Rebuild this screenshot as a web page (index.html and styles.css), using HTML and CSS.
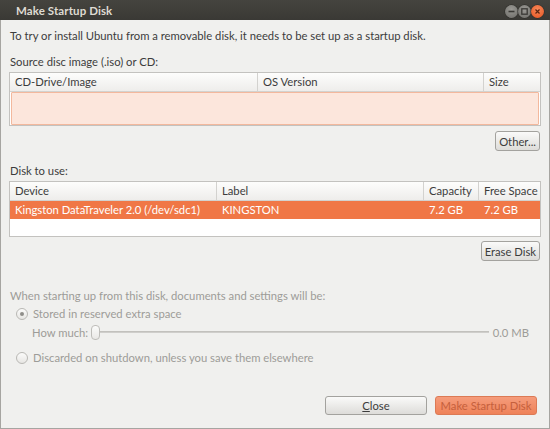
FILE: index.html
```html
<!DOCTYPE html>
<html>
<head>
<meta charset="utf-8">
<link rel="stylesheet" href="styles.css">
</head>
<body>
<div class="window">
  <div class="titlebar">
    <span class="title">Make Startup Disk</span>
    <div class="wbtns">
      <span class="wbtn gray"><svg width="13" height="13" viewBox="0 0 13 13"><rect x="3.5" y="5.7" width="6" height="1.6" fill="#3a3935"/></svg></span>
      <span class="wbtn gray"><svg width="13" height="13" viewBox="0 0 13 13"><rect x="3.8" y="3.8" width="5.4" height="5.4" fill="none" stroke="#3a3935" stroke-width="1.3"/></svg></span>
      <span class="wbtn orange"><svg width="13" height="13" viewBox="0 0 13 13"><path d="M4.5 4.5 L8.5 8.5 M8.5 4.5 L4.5 8.5" stroke="#5a2410" stroke-width="1.2"/></svg></span>
    </div>
  </div>
  <div class="main">
    <div class="text intro">To try or install Ubuntu from a removable disk, it needs to be set up as a startup disk.</div>
    <div class="text lbl">Source disc image (.iso) or CD:</div>
    <div class="table t1">
      <div class="thead">
        <div class="th">CD-Drive/Image</div>
        <div class="th">OS Version</div>
        <div class="th last">Size</div>
      </div>
      <div class="tbody1"><div class="empty-hl"></div></div>
    </div>
    <div class="btnrow r1"><button class="btn">Other...</button></div>
    <div class="text lbl2">Disk to use:</div>
    <div class="table t2">
      <div class="thead">
        <div class="th">Device</div>
        <div class="th">Label</div>
        <div class="th">Capacity</div>
        <div class="th last">Free Space</div>
      </div>
      <div class="trow sel">
        <div class="td">Kingston DataTraveler 2.0 (/dev/sdc1)</div>
        <div class="td">KINGSTON</div>
        <div class="td">7.2 GB</div>
        <div class="td">7.2 GB</div>
      </div>
      <div class="trow empty"></div>
    </div>
    <div class="btnrow r2"><button class="btn">Erase Disk</button></div>
    <div class="text dis when">When starting up from this disk, documents and settings will be:</div>
    <div class="radio r-stored"><span class="rb on"></span><span class="text dis">Stored in reserved extra space</span></div>
    <div class="howmuch">
      <span class="text dis">How much:</span>
      <div class="slider"><span class="track"></span><span class="thumb"></span></div>
      <span class="text dis mb">0.0 MB</span>
    </div>
    <div class="radio r-disc"><span class="rb"></span><span class="text dis">Discarded on shutdown, unless you save them elsewhere</span></div>
    <div class="footer">
      <button class="btn fbtn"><span class="ul">C</span>lose</button>
      <button class="btn fbtn primary">Make Startup Disk</button>
    </div>
  </div>
</div>
</body>
</html>
```
FILE: styles.css
```css
html, body {
  margin: 0;
  padding: 0;
  width: 550px;
  height: 429px;
  overflow: hidden;
  background: #f0f0ee;
  font-family: "Lato", "Noto Sans", sans-serif;
  font-size: 11.25px;
  color: #3c3c3c;
}
.window {
  width: 550px;
  height: 429px;
  display: flex;
  flex-direction: column;
  box-sizing: border-box;
}
.titlebar {
  height: 20px;
  flex: none;
  background: linear-gradient(#45443f, #3a3935);
  display: flex;
  align-items: center;
  justify-content: space-between;
  padding: 0 6px 0 16px;
}
.title {
  color: #dfdbd2;
  font-weight: bold;
  font-size: 11.5px;
  letter-spacing: 0.1px;
}
.wbtns {
  display: flex;
  gap: 0;
  margin-top: 2px;
}
.wbtn {
  width: 13px;
  height: 13px;
  border-radius: 50%;
  display: flex;
}
.wbtn.gray {
  background: radial-gradient(circle at 50% 35%, #9a9994, #6c6b67);
  box-shadow: 0 0 0 0.5px #2e2d2a;
}
.wbtn.orange {
  background: radial-gradient(circle at 50% 35%, #f7895a, #e6521f);
  box-shadow: 0 0 0 0.5px #2e2d2a;
}
.main {
  flex: 1;
  display: flex;
  flex-direction: column;
  border-left: 1px solid #a6a5a1;
  border-right: 1px solid #a6a5a1;
  border-bottom: 1px solid #a6a5a1;
  padding: 0 8px 13px 8px;
}
.text {
  line-height: 15px;
  white-space: nowrap;
}
.intro { margin-top: 8px; padding-left: 1px; }
.lbl { margin-top: 11px; padding-left: 1px; }
.lbl2 { margin-top: 12px; padding-left: 1px; }
.table {
  border: 1px solid #c3c2bf;
  background: #ffffff;
  margin-top: 3px;
}
.thead {
  display: grid;
  height: 18px;
  background: linear-gradient(#fdfdfc, #eeedeb);
  border-bottom: 1px solid #d3d2cf;
}
.t1 .thead, .t1 .tbody1 { grid-template-columns: 248px 226px 1fr; }
.t2 .thead, .t2 .trow { grid-template-columns: 207px 207px 55px 1fr; }
.th {
  border-right: 1px solid #d3d2cf;
  padding-left: 5px;
  line-height: 18px;
  white-space: nowrap;
  overflow: hidden;
}
.th.last { border-right: none; }
.tbody1 {
  height: 33px;
  padding: 0 1px 0 1px;
  background: #fff;
  display: block;
}
.empty-hl {
  height: 31px;
  border: 1px solid #f3b89d;
  background: #fce6dc;
  border-radius: 1px;
}
.trow {
  display: grid;
  height: 18px;
}
.trow.sel {
  background: #f07746;
  color: #ffffff;
}
.td {
  padding-left: 5px;
  line-height: 18px;
  white-space: nowrap;
}
.trow.empty { height: 17px; }
.btnrow {
  display: flex;
  justify-content: flex-end;
  padding-right: 1px;
}
.r1 { margin-top: 5px; }
.r2 { margin-top: 4px; }
.btn {
  font-family: inherit;
  font-size: 11.25px;
  color: #3c3c3c;
  height: 20px;
  padding: 0 3px;
  border: 1px solid #a3a29e;
  border-radius: 3px;
  background: linear-gradient(#fafaf9, #dddcd9);
  line-height: 17px;
  margin: 0;
  white-space: nowrap;
}
.dis { color: #9d9c98; }
.when { margin-top: 27px; padding-left: 1px; }
.radio {
  display: flex;
  align-items: center;
  gap: 5px;
  padding-left: 7px;
}
.r-stored { margin-top: 3px; }
.r-disc { margin-top: 10px; }
.rb {
  width: 10px;
  height: 10px;
  border-radius: 50%;
  border: 1px solid #b9b8b4;
  background: linear-gradient(#fbfbfa, #e7e6e3);
  position: relative;
  flex: none;
}
.rb.on::after {
  content: "";
  position: absolute;
  left: 3px;
  top: 3px;
  width: 4px;
  height: 4px;
  border-radius: 50%;
  background: #8f8e8a;
}
.howmuch {
  display: flex;
  align-items: center;
  margin-top: 4px;
  padding-left: 23px;
}
.slider {
  flex: 1;
  height: 15px;
  position: relative;
  margin-left: 3px;
  margin-right: 4px;
}
.track {
  position: absolute;
  left: 0;
  right: 0;
  top: 6px;
  height: 2px;
  background: #cfcecb;
  border-top: 1px solid #c2c1bd;
  box-sizing: border-box;
}
.thumb {
  position: absolute;
  left: 0;
  top: 0;
  width: 7px;
  height: 13px;
  border: 1px solid #bebdb9;
  border-radius: 4px;
  background: linear-gradient(#fbfbfa, #e9e8e5);
}
.mb { padding-right: 12px; }
.footer {
  margin-top: auto;
  display: flex;
  justify-content: flex-end;
  gap: 8px;
  padding-right: 4px;
}
.fbtn {
  width: 102px;
  height: 19px;
  line-height: 16px;
  padding: 0;
}
.ul { text-decoration: underline; }
.primary {
  background: linear-gradient(#f59c7b, #ef8259);
  border-color: #dc7a55;
  color: #c5603c;
}
```
